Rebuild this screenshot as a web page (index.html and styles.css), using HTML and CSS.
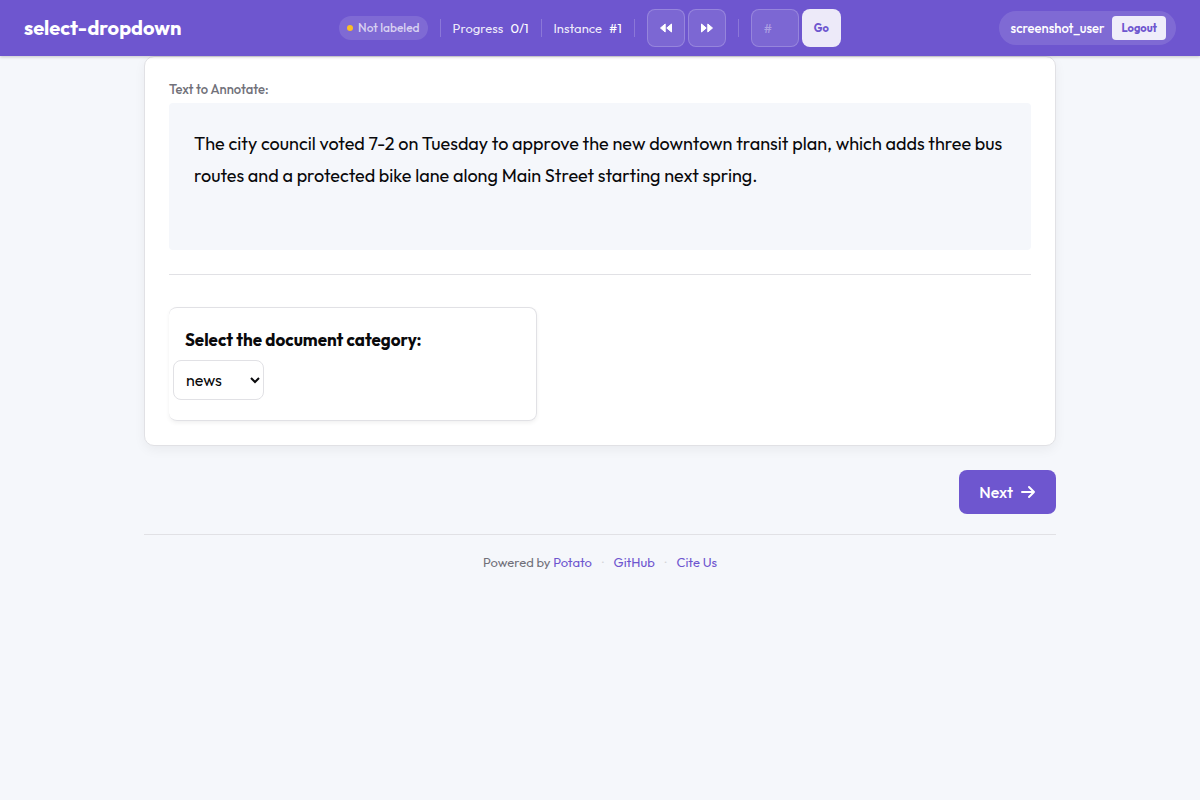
FILE: index.html
```html
<!DOCTYPE html>
<html lang="en">
<head>
<meta charset="utf-8">
<meta name="viewport" content="width=device-width, initial-scale=1">
<title>select-dropdown</title>
<link rel="stylesheet" href="styles.css">
</head>
<body>
<header class="navbar">
  <h1 class="brand">select-dropdown</h1>
  <div class="nav-tools">
    <span class="status"><span class="status-dot"></span>Not labeled</span>
    <span class="divider"></span>
    <span class="stat">Progress <span class="stat-value">0/1</span></span>
    <span class="divider"></span>
    <span class="stat">Instance <span class="stat-value">#1</span></span>
    <span class="divider"></span>
    <div class="group">
      <button class="nav-button" type="button" aria-label="Previous unannotated">
        <svg width="14" height="12" viewBox="0 0 14 12" fill="currentColor" stroke="currentColor" stroke-linejoin="round"><path d="M6.2 2v8L1.5 6zM12.5 2v8L7.8 6z"/></svg>
      </button>
      <button class="nav-button" type="button" aria-label="Next unannotated">
        <svg width="14" height="12" viewBox="0 0 14 12" fill="currentColor" stroke="currentColor" stroke-linejoin="round"><path d="M1.5 2v8L6.2 6zM7.8 2v8L12.5 6z"/></svg>
      </button>
    </div>
    <span class="divider"></span>
    <form class="group">
      <input class="goto-input" type="text" placeholder="#" aria-label="Go to instance">
      <button class="goto-button" type="button">Go</button>
    </form>
  </div>
  <div class="user">
    <span class="user-name">screenshot_user</span>
    <button class="logout" type="button">Logout</button>
  </div>
</header>
<main class="page">
  <section class="card">
    <h2 class="label">Text to Annotate:</h2>
    <p class="instance">The city council voted 7-2 on Tuesday to approve the new downtown transit plan, which adds three bus routes and a protected bike lane along Main Street starting next spring.</p>
    <div class="forms">
      <form class="schema">
        <label class="schema-title" for="category">Select the document category:</label>
        <select class="schema-select" id="category">
          <option>news</option>
          <option>opinion</option>
          <option>sports</option>
        </select>
      </form>
    </div>
  </section>
  <div class="actions">
    <button class="next" type="button">Next
      <svg width="16" height="14" viewBox="0 0 16 14" fill="none" stroke="currentColor" stroke-width="2" stroke-linecap="round" stroke-linejoin="round"><path d="M2 7h12M9 2l5 5-5 5"/></svg>
    </button>
  </div>
  <footer class="footer">
    <span>Powered by <a href="#potato">Potato</a></span>
    <span class="dot">·</span>
    <a href="#github">GitHub</a>
    <span class="dot">·</span>
    <a href="#cite">Cite Us</a>
  </footer>
</main>
</body>
</html>
```
FILE: styles.css
```css
:root {
  --primary: #6e56cf;
  --background: #f5f7fb;
  --border: #e1e1e5;
  --muted: #71717a;
}

* {
  box-sizing: border-box;
}

body {
  margin: 0;
  background: var(--background);
  color: #09090b;
  font-family: Outfit, Lato, sans-serif;
  font-size: 16px;
  line-height: 24px;
}

button,
input,
select {
  margin: 0;
  font: inherit;
}

.navbar {
  position: relative;
  display: flex;
  align-items: center;
  justify-content: space-between;
  height: 56px;
  padding: 0 24px;
  background: var(--primary);
  color: #fff;
  box-shadow: 0 1px 3px rgba(0, 0, 0, 0.2);
}

.brand {
  margin: 0;
  font-size: 20px;
  font-weight: 700;
}

.nav-tools {
  display: flex;
  align-items: center;
  gap: 12px;
  font-size: 13px;
}

.status {
  display: flex;
  align-items: center;
  gap: 5px;
  padding: 0 8px;
  border-radius: 12px;
  background: rgba(255, 255, 255, 0.12);
  color: rgba(255, 255, 255, 0.7);
  font-size: 12px;
  font-weight: 500;
}

.status-dot {
  width: 6px;
  height: 6px;
  border-radius: 50%;
  background: #fbbf24;
}

.divider {
  width: 1px;
  height: 18px;
  background: rgba(255, 255, 255, 0.2);
}

.stat {
  display: flex;
  gap: 7px;
  color: rgba(255, 255, 255, 0.9);
}

.stat-value {
  color: #fff;
}

.group {
  display: flex;
  gap: 3px;
}

.nav-button,
.goto-input {
  height: 38px;
  border: 1px solid rgba(255, 255, 255, 0.2);
  border-radius: 8px;
  background: rgba(255, 255, 255, 0.1);
  color: #fff;
}

.nav-button {
  display: grid;
  place-items: center;
  width: 38px;
  padding: 0;
}

.goto-input {
  width: 48px;
  padding: 0 12px;
}

.goto-input::placeholder {
  color: rgba(255, 255, 255, 0.4);
}

.goto-button,
.logout {
  border: 0;
  background: rgba(255, 255, 255, 0.88);
  color: var(--primary);
  font-size: 11px;
  font-weight: 700;
}

.goto-button {
  width: 39px;
  padding: 0;
  border-radius: 8px;
}

.user {
  display: flex;
  align-items: center;
  gap: 8px;
  padding: 5px 10px 5px 12px;
  border-radius: 17px;
  background: rgba(255, 255, 255, 0.12);
  font-size: 13px;
  font-weight: 500;
}

.logout {
  height: 24px;
  padding: 0 9px;
  border-radius: 4px;
}

.page {
  max-width: 960px;
  margin: 0 auto;
  padding: 0 24px;
}

.card {
  padding: 24px;
  border: 1px solid var(--border);
  border-radius: 10px;
  background: #fff;
  box-shadow: 0 4px 12px rgba(0, 0, 0, 0.05);
}

.label {
  margin: 0 0 6px;
  color: var(--muted);
  font-size: 13px;
  font-weight: 500;
  line-height: 16px;
}

.instance {
  min-height: 147px;
  margin: 0 0 24px;
  padding: 25px;
  border-radius: 4px;
  background: var(--background);
  font-size: 18px;
  line-height: 32px;
}

.forms {
  padding-top: 32px;
  border-top: 1px solid var(--border);
}

.schema {
  display: flex;
  flex-direction: column;
  align-items: flex-start;
  gap: 8px;
  max-width: 368px;
  padding: 20px 4px;
  border: 1px solid var(--border);
  border-left-width: 0;
  border-radius: 8px;
  box-shadow: 0 2px 4px rgba(0, 0, 0, 0.06);
}

.schema-title {
  padding: 0 12px;
  font-size: 17px;
  font-weight: 700;
}

.schema-select {
  width: 91px;
  height: 40px;
  padding: 0 0 0 8px;
  border: 1px solid var(--border);
  border-radius: 8px;
  background: #fff;
  color: inherit;
}

.actions {
  display: flex;
  justify-content: flex-end;
  padding: 24px 0 20px;
}

.next {
  display: flex;
  align-items: center;
  gap: 7px;
  height: 44px;
  padding: 0 20px;
  border: 0;
  border-radius: 8px;
  background: var(--primary);
  color: #fff;
  font-weight: 500;
}

.footer {
  display: flex;
  justify-content: center;
  gap: 10px;
  padding: 15px 0;
  border-top: 1px solid var(--border);
  color: var(--muted);
  font-size: 13px;
}

.footer a {
  color: var(--primary);
  text-decoration: none;
}

.dot {
  color: #d4d4d8;
}
```
